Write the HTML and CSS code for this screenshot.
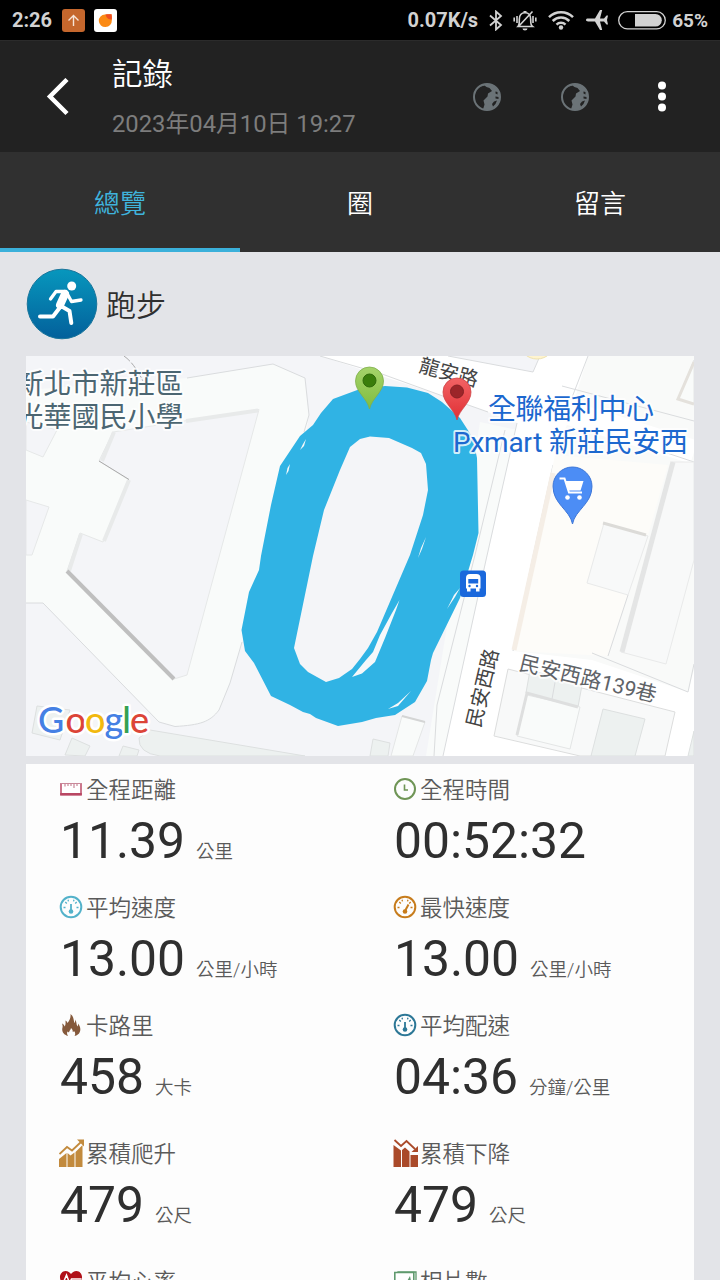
FILE: index.html
```html
<!DOCTYPE html>
<html lang="zh-Hant">
  <head>
    <meta charset="UTF-8" />
    <meta name="viewport" content="width=device-width, initial-scale=1.0" />
    <title>記錄</title>
    <link rel="stylesheet" href="styles.css">
  </head>
  <body>
    <div class="status-bar">
      <span class="clock">2:26</span>
      <svg class="app-icon" width="23" height="23" viewBox="0 0 23 23">
        <rect width="23" height="23" rx="3" fill="#c5672d" />
        <path d="M11.5 17V7M6.5 11.5l5-5 5 5" fill="none" stroke="#f6e4d8" stroke-width="1.4" />
      </svg>
      <svg class="app-icon" width="23" height="23" viewBox="0 0 23 23">
        <rect width="23" height="23" rx="3" fill="#fff" />
        <path d="M11 5.500c2.500-.2 4.500-.5 6.500-.2.500 2 .5 4 .3 6.200a6.500 6.300 0 1 1-6.800-6z" fill="#fb8a14" />
        <path d="M11.500 5.500c2-.2 4-.5 6-.2.4 2 .4 3.500.3 5.200-3 0-5.300-1-6.300-5z" fill="#ee4d22" />
      </svg>
      <span class="speed">0.07K/s</span>
      <svg class="bluetooth" width="14" height="21" viewBox="0 0 14 21">
        <path d="M1 5.500l11 9.500-5 4.500v-18l5 4.500L1 15.500" fill="none" stroke="#d2d2d2" stroke-width="1.8" />
      </svg>
      <svg class="mute" width="24" height="21" viewBox="0 0 24 21">
        <g fill="none" stroke="#d2d2d2" stroke-width="1.600">
          <path d="M5 16.500h14.500c-2-1.500-1.800-3-1.800-7 0-4-2-6.700-5.700-6.700S6.300 5.500 6.300 9.500c0 4 .2 5.500-1.300 7zM19.500 1.500l-14 15M4 6v7M1.200 7.500v4M20 6v7M22.800 7.500v4" />
        </g>
        <path d="M9.500 18.500h5a2.500 2 0 0 1-5 0zM10.500 1h3v2h-3z" fill="#d2d2d2" />
      </svg>
      <svg class="wifi" width="26" height="20" viewBox="0 0 26 20">
        <g fill="none" stroke="#d2d2d2" stroke-width="2.500">
          <path d="M1 7.200a17 17 0 0 1 24 0M4.700 11a11.700 11.700 0 0 1 16.600 0M8.500 14.600a6.400 6.400 0 0 1 9 0" />
        </g>
        <circle cx="13" cy="17.500" r="2.200" fill="#d2d2d2" />
      </svg>
      <svg class="plane" width="22" height="20" viewBox="0 0 22 20">
        <path d="M0 10c0-1 1-1.400 2-1.400h7L14 0h2.200l-2.200 8.600h4L20.500 5.500H22L21 10l1 4.500h-1.500L18 11.400h-4L16.200 20H14L9 11.400H2C1 11.400 0 11 0 10z" fill="#d2d2d2" />
      </svg>
      <svg class="battery" width="48" height="19" viewBox="0 0 48 19">
        <rect x=".7" y=".7" width="46.600" height="17.200" rx="8.600" fill="none" stroke="#d2d2d2" stroke-width="1.300" />
        <path d="M17 3h20.500a6.300 6.300 0 0 1 0 12.600H17z" fill="#d2d2d2" />
      </svg>
      <span class="percent">65%</span>
    </div>

    <header class="header">
      <svg class="back" width="24" height="38" viewBox="0 0 24 38">
        <path d="M21 1.500L4 18.500l17 17" fill="none" stroke="#fff" stroke-width="4.500" />
      </svg>
      <div class="heading">
        <h1>記錄</h1>
        <p>2023年04月10日 19:27</p>
      </div>
      <svg class="globe" width="28" height="28" viewBox="0 0 28 28">
        <use href="#globe" />
      </svg>
      <svg class="globe" width="28" height="28" viewBox="0 0 28 28">
        <g id="globe">
          <circle cx="14" cy="14" r="13" fill="none" stroke="#6b7377" stroke-width="2" />
          <path d="M8 3.500C12 0 19 1 22.500 4.500c2.500 2 4 5 4 9.500 0 5-2 8-4.500 10-3.500 3-8 3-12 2.500l1.500-5-1-4 4-4 .5-3 4-2.500-2.500-3-3-1-2-1.500z" fill="#6b7377" />
          <path d="M22.500 8.500l2 .5v2.500l-2-1zM22.500 13.500l3 .5v2l-3-.5zM19 21l2-2.500 3-1-1.500 3.500-2.500 2.500z" fill="#222" />
        </g>
      </svg>
      <svg class="more" width="10" height="32" viewBox="0 0 10 32">
        <g fill="#fff">
          <circle cx="5" cy="4.500" r="4" />
          <circle cx="5" cy="15.500" r="4" />
          <circle cx="5" cy="26.500" r="4" />
        </g>
      </svg>
    </header>

    <nav class="tabs">
      <a class="tab active">總覽</a>
      <a class="tab">圈</a>
      <a class="tab">留言</a>
    </nav>

    <main class="content">
      <div class="sport">
        <svg width="72" height="72" viewBox="0 0 72 72">
          <defs>
            <linearGradient id="sportBlue" x1="0" y1="0" x2="0" y2="1">
              <stop offset="0" stop-color="#0797bd" />
              <stop offset="1" stop-color="#03609b" />
            </linearGradient>
          </defs>
          <circle cx="36" cy="36" r="34.800" fill="url(#sportBlue)" stroke="#19759b" />
          <circle cx="45.700" cy="18" r="4.500" fill="#fff" />
          <g fill="none" stroke="#fff" stroke-linecap="round" stroke-linejoin="round">
            <path d="M24.500 31l5.500-7.500h10l5.500 10 9.500-1.500" stroke-width="3.300" />
            <path d="M14 48.500h13l8-10.500" stroke-width="4" />
            <path d="M35 38l8.500 5L45.300 55" stroke-width="4" />
            <path d="M39 26l-5 11" stroke-width="8" />
          </g>
        </svg>
        <span>跑步</span>
      </div>

      <!-- map -->
      <svg class="map" width="668" height="400" viewBox="26 356 668 400">
        <defs>
          <linearGradient id="pinGreen" x1="0" y1="0" x2="0" y2="1">
            <stop offset="0" stop-color="#a6d36b" />
            <stop offset="1" stop-color="#7fbd3e" />
          </linearGradient>
          <linearGradient id="pinRed" x1="0" y1="0" x2="0" y2="1">
            <stop offset="0" stop-color="#f26365" />
            <stop offset="1" stop-color="#e02f34" />
          </linearGradient>
        </defs>
        <rect x="26" y="356" width="668" height="400" fill="#f4f5f8" />

        <!-- school -->
        <path d="M26 390L187 378 273 364 305 378 309 415 300 480 242 642 230 683 219 710C210 722 200 725 175 726.500L159 722 43 603H26z" fill="#f9fbfa" />
        <path d="M187 378L273 364 305 378 309 415 304 432M242 642L230 683 219 710C210 722 200 725 175 726.500L159 722 43 603H26" class="edge" />
        <path d="M124 356q10 7 19 25" fill="none" stroke="#aaa" stroke-dasharray="8 2" />
        <path d="M113 432L259 409.500 187 675 174 679 67 571 80 533 103 542 129 480 99 461z" class="ground" />
        <path d="M26 422L57 430 43 457 26 450zM26 500L49 507 32 555H26z" class="ground" />
        <path d="M102 461L114 432M104 541L129 480M69 571L81 534M186 421L258 410.500" fill="none" stroke="#e8eaea" stroke-width="4" />
        <path d="M99 461l30 18.500" stroke="#aaa" />
        <path d="M67 571L174 679" stroke="#bfbfbf" stroke-width="4" />

        <path d="M150 730L305 756H160Q138 753 139 738zM37 706L32 733 60 740 70 710zM65 755L72 738 90 746 85 756zM119 756L123 746 139 750 137 756z" class="house" />

        <!-- main roads -->
        <path d="M480 422L517 430 443 756 426 756z" fill="#f9fbfa" />
        <path d="M505 430L475 555 437 705 434 756" class="edge" />
        <path d="M320 356H448L533 372 540 356H588L694 420V756H443L517 423 488 412 440 395z" fill="#fff" />
        <path d="M320 356L382 374 440 395 488 412M448 356L533 372 540 356M517 423L486 560 443 756" class="edge" />
        <circle cx="537" cy="341" r="18" fill="#fff4cf" stroke="#eee2b0" />

        <!-- right hand blocks -->
        <path d="M588 356H694V670L688 692 592 660 513 651 533 556 553 470z" fill="#f9faf9" />
        <path d="M588 356L571 400M513 651L533 556 553 465" class="edge" />
        <path d="M555 455L514 651 608 656 628 595 587 583 604 523 648 536 668 465z" fill="#fdfcf9" />
        <path d="M553 473L514 650" stroke="#f5eee6" stroke-width="5" />
        <path d="M587 583L604 523 648 536 628 595z" fill="#f8f9f9" stroke="#e9eaea" />
        <path d="M603 523l43 12" stroke="#dcdbd8" stroke-width="3" />
        <path d="M560 410L694 452" stroke="#fff" stroke-width="24" />
        <path d="M562 386L694 421M667 453L694 462" class="edge" />
        <path d="M672 462H694V560L666 664 621 652z" fill="#f8f9f9" stroke="#e9eaea" />
        <path d="M673 462L622 652" stroke="#e4e5e5" stroke-width="5" />
        <path d="M694 360L678 399 694 404z" class="yard" />
        <path d="M694 362L678 399 694 404" fill="none" stroke="#e4e1dc" stroke-width="3" />
        <path d="M628 595L608 656M592 653L688 692 694 664" class="edge" />

        <path d="M508 669L494 736 580 756H665L675 712z" fill="#f8f9f9" stroke="#dcdddd" />
        <path d="M530 670L526 693 578 707 582 685zM603 709L645 719 635 756H591z" class="house" />
        <path d="M556 677L552 699" class="edge" />
        <path d="M527 695L517 736 570 749 580 707z" class="yard" />
        <path d="M578 707L527 693 517 735" fill="none" stroke="#dedfdf" stroke-width="3" />
        <path d="M694 731L688 756H694z" class="house" />
        <path d="M402 716L425 722 413 756H391z" class="yard" />
        <path d="M402 716L425 722" stroke="#d4d5d5" stroke-width="2" />
        <path d="M373 739L390 743 388 756H370z" class="house" />

        <!-- route -->
        <path fill="#30b3e4" fill-rule="evenodd" d="M360 389L333 399 321 413 313 425 300 436 280 466 271 505 261 556 259 570 249 592 241.500 630 245 651 254 663 271 696 290 705 303 712 310 714 316 718 338 726 362 722 376 718 395 715 415 702 427 681 431 660 433 653 460 598 473 555 478.500 533 477 458 473 438 460 418 442 402 428 393 407 387.500 385 386z
          M360 439L350 447 340 470 324 510 313 556 294 648 300 664 308 672 326 682 339 678 352 669 360 659 368 648 377 632 410 555 423 515 428 490 426 464 421 453 412 448 389 438 370 436.500z" />
        <g fill="#f6f8fa">
          <path d="M399.500 600L392 613 380 635 373 652 366 660 352 677 362 673.500 375 662 385 638 396 610z" />
          <path d="M460 588L454 595 447 609 455 597zM388 709L398 706 411 691 398 703zM426 537L421 548 418 558 422 549zM306 439L303 444 300 450 304 446zM290 464L287.500 468 286 475 288.500 471z" />
        </g>

        <!-- labels -->
        <g class="map-label school" text-anchor="end">
          <text x="183.500" y="393.500">新北市新莊區</text>
          <text x="183.500" y="426.500">光華國民小學</text>
        </g>
        <g class="map-label road">
          <text font-size="20" transform="translate(418 371.500) rotate(15)">龍安路</text>
          <text font-size="20" transform="translate(480 728.500) rotate(-76.500)">民安西路</text>
          <text class="lane" font-size="21" transform="translate(518 669.500) rotate(13.500)">民安西路139巷</text>
        </g>
        <g class="map-label shop">
          <text x="488" y="419" textLength="166">全聯福利中心</text>
          <text x="453" y="452" textLength="235">Pxmart 新莊民安西</text>
        </g>

        <!-- pins -->
        <path d="M369.500 409C367 398 355.500 392 355.500 381a14 14 0 0 1 28 0C383.500 392 372 398 369.500 409z" fill="url(#pinGreen)" stroke="#7fae4c" stroke-width=".8" />
        <circle cx="369.500" cy="380.500" r="6.500" fill="#3a7d0b" stroke="#2f6a0a" />
        <path d="M457 420C454.500 409 443 403 443 392a14 14 0 0 1 28 0C471 403 459.500 409 457 420z" fill="url(#pinRed)" stroke="#cf4548" stroke-width=".8" />
        <circle cx="457" cy="391.500" r="6.500" fill="#9c2529" stroke="#862024" />
        <path d="M572.500 524C570 510 553 504 553 486.500a19.500 19.500 0 0 1 39 0C592 504 575 510 572.500 524z" fill="#4c8df5" stroke="#3e77d8" />
        <path d="M559.500 478.500h5l4.500 14h13" fill="none" stroke="#fff" stroke-width="2" />
        <path d="M565.500 481h18l-3 9.500h-12.500z" fill="#fff" />
        <circle cx="567.500" cy="497.500" r="2.300" fill="#fff" />
        <circle cx="579.500" cy="497.500" r="2.300" fill="#fff" />
        <rect x="460" y="570.500" width="26" height="26.500" rx="3.500" fill="#1a68dc" />
        <path d="M466 578q0-4 4-4h6.500q4 0 4 4v10.500h-1v3h-3.500v-3h-5.500v3H467v-3h-1z" fill="#fff" />
        <path d="M468.300 579h9.900v4.500h-9.900z" fill="#1a68dc" />
        <circle cx="469.500" cy="586" r="1.200" fill="#1a68dc" />
        <circle cx="477" cy="586" r="1.200" fill="#1a68dc" />

        <text class="google" x="38 65.500 85 104.500 122.300 130" y="732.500"><tspan fill="#4580e4">G</tspan><tspan fill="#dc4437">o</tspan><tspan fill="#f2b90f">o</tspan><tspan fill="#4580e4">g</tspan><tspan fill="#35a152">l</tspan><tspan fill="#dc4437">e</tspan></text>
      </svg>

      <section class="stats">
        <div class="stat">
          <div class="label">
            <svg viewBox="0 0 24 24"><path d="M2 6v12h20V6" fill="#fff" stroke="#c4607a" stroke-width="1.700" /><path d="M1.200 17h21.600" stroke="#b94763" stroke-width="2" /><path d="M1.200 6.500h21.600M6 6v3.500M9 6v3M12 6v3M15 6v5M18 6v3" stroke="#c98899" stroke-width="1.200" /></svg>
            全程距離
          </div>
          <div class="value">11.39<small>公里</small></div>
        </div>
        <div class="stat">
          <div class="label">
            <svg viewBox="0 0 24 24"><circle cx="12" cy="12" r="10" fill="none" stroke="#6f9556" stroke-width="2" /><path d="M11.500 7.500v5.500H15" fill="none" stroke="#6f9556" stroke-width="1.600" /></svg>
            全程時間
          </div>
          <div class="value">00:52:32</div>
        </div>
        <div class="stat">
          <div class="label">
            <svg class="gauge" viewBox="0 0 24 24" color="#53b2ca"><g id="dial"><circle cx="12" cy="12" r="10.300" fill="none" stroke="currentColor" stroke-width="2" /><path d="M4.500 12.500h2M17.500 12.500h2M6.300 7l1.500 1.500M17.700 7l-1.500 1.500M9 4.800l.5 1.600M15 4.800l-.5 1.600" stroke="currentColor" stroke-width="1.300" /></g><path d="M12 9v7" stroke="currentColor" stroke-width="1.800" /><circle cx="12" cy="16.500" r="2.300" fill="currentColor" /></svg>
            平均速度
          </div>
          <div class="value">13.00<small>公里/小時</small></div>
        </div>
        <div class="stat">
          <div class="label">
            <svg class="gauge" viewBox="0 0 24 24" color="#c77c1c"><use href="#dial" /><path d="M15.500 9.500L12 16" stroke="currentColor" stroke-width="2" /><circle cx="12" cy="16.500" r="2.300" fill="currentColor" /></svg>
            最快速度
          </div>
          <div class="value">13.00<small>公里/小時</small></div>
        </div>
        <div class="stat">
          <div class="label">
            <svg viewBox="0 0 24 24"><path d="M9 23C4 21.500 2.500 18 3.500 14.500c.3-1.500 0-3-.5-4 1.500.5 2.300 1.500 2.500 3C7 11.500 6.500 9 6.500 7.500c1 .6 1.700 1.500 2 2.500C10.500 7.500 12 4.500 11.500 1 15 3.500 14.500 7.500 15.500 10c.7-.8.800-2 .5-3.500 2 2 1 5 2.500 7 .5-.8.700-1.700.5-3 2.500 3 2.800 6 1.800 8.500-.7 2-2.800 3.600-5.300 4 1-1.500 1-3.500-.5-5-.3.800-.8 1.200-1.300 1 .3-1.500-.5-3-1.700-4-.2 2-1.800 2.800-2 4.500l-1.500-1c-.8 1.500-.5 3 .5 4.500z" fill="#85593b" /></svg>
            卡路里
          </div>
          <div class="value">458<small>大卡</small></div>
        </div>
        <div class="stat">
          <div class="label">
            <svg class="gauge" viewBox="0 0 24 24" color="#2c7796"><use href="#dial" /><path d="M12 9v7" stroke="currentColor" stroke-width="1.800" /><circle cx="12" cy="16.500" r="2.300" fill="currentColor" /></svg>
            平均配速
          </div>
          <div class="value">04:36<small>分鐘/公里</small></div>
        </div>
        <div class="stat">
          <div class="label">
            <svg class="chart" viewBox="0 0 26 28"><path d="M0 28V20l7.500-6v14zM8.500 28V14l3 2.500 4-3V28zM16.500 28V13l7-7V28z" fill="#c28a3d" /><path d="M.5 15l7.500-7 5 3.500 9-8.500" fill="none" stroke="#c28a3d" stroke-width="1.800" /><path d="M18 .500h7v7z" fill="#c28a3d" /></svg>
            累積爬升
          </div>
          <div class="value">479<small>公尺</small></div>
        </div>
        <div class="stat">
          <div class="label">
            <svg class="chart" viewBox="0 0 26 28"><path d="M.5 28V6l7.500 5.500V28zM9 28V11l3-2.500 4.500 4V28zM17.500 28V16H25v12z" fill="#aa4a2a" /><path d="M1.500 1l6.500 6 5.500-5 8.500 8" fill="none" stroke="#aa4a2a" stroke-width="1.800" /><path d="M18.500 13h6.500V7z" fill="#aa4a2a" /></svg>
            累積下降
          </div>
          <div class="value">479<small>公尺</small></div>
        </div>
        <div class="stat">
          <div class="label">
            <svg viewBox="0 0 24 24"><path d="M12 23L2.500 13C-1 8 2 2 6.500 2 9 2 11 3.500 12 5c1-1.500 3-3 5.500-3C22 2 25 8 21.500 13z" fill="#b01018" /><path d="M1 12h4l2.500-6 3 8 2-4h10" fill="none" stroke="#fff" stroke-width="1.500" /></svg>
            平均心率
          </div>
        </div>
        <div class="stat">
          <div class="label">
            <svg viewBox="0 0 24 24"><path d="M5 5V3h18v15h-2" fill="none" stroke="#5f9a6e" stroke-width="1.300" /><path d="M1.800 3.500h19v17h-19z" fill="#fff" stroke="#5f9a6e" stroke-width="1.600" /><path d="M4 17l5-6 4 3 4-7 2 10z" fill="#5f9a6e" /></svg>
            相片數
          </div>
        </div>
      </section>
    </main>
  </body>
</html>
```
FILE: styles.css
```css
* {
  box-sizing: border-box;
}

body {
  margin: 0;
  width: 720px;
  height: 1280px;
  overflow: hidden;
  background: #e3e4e8;
  font-family: Roboto, "Noto Sans CJK TC", sans-serif;
  color: #2f2f2f;
}

h1, p {
  margin: 0;
  font-weight: normal;
}

/* status bar */
.status-bar {
  display: flex;
  align-items: center;
  height: 40px;
  padding: 0 12px;
  background: #000;
  color: #d2d2d2;
  font-size: 20px;
  font-weight: bold;
}

.clock {
  width: 50px;
}

.app-icon {
  margin-right: 9px;
}

.speed {
  margin-left: auto;
  margin-right: 11px;
}

.bluetooth {
  margin-right: 10px;
}

.mute {
  margin-right: 11px;
}

.wifi {
  margin-right: 12px;
}

.plane {
  margin-right: 10px;
}

.battery {
  margin-right: 6px;
}

.percent {
  font-size: 19px;
}

/* title */
.header {
  display: flex;
  align-items: center;
  height: 112px;
  padding: 0 53px 0 46px;
  background: #222;
  border-top: 1px solid #2b2b2b;
}

.heading {
  width: 361px;
  margin-left: 42px;
  padding-top: 2px;
}

.heading h1 {
  font-size: 30.5px;
  font-weight: 350;
  line-height: 44px;
  color: #fff;
}

.heading p {
  margin-top: 9px;
  font-size: 23.8px;
  line-height: 36px;
  color: #7d7d7d;
}

.globe {
  margin-right: 60px;
}

.more {
  margin-left: auto;
}

/* tabs */
.tabs {
  display: flex;
  height: 100px;
  background: #303030;
}

.tab {
  flex: 1;
  padding-top: 4px;
  border-bottom: 4px solid transparent;
  color: #fff;
  font-size: 26px;
  font-weight: 350;
  line-height: 96px;
  text-align: center;
}

.tab.active {
  color: #3fb3dc;
  border-bottom-color: #3bb0da;
}

.content {
  padding: 0 26px;
}

.sport {
  display: flex;
  align-items: center;
  height: 104px;
  font-size: 30px;
  font-weight: 350;
}

.sport span {
  margin: -2px 0 0 8px;
}

/* map */
.map {
  display: block;
}

.ground {
  fill: #f4f5f8;
  stroke: #e6e8e8;
}

.house {
  fill: #edf1f0;
  stroke: #dde0e0;
}

.yard {
  fill: #f9fbfa;
  stroke: #e4e6e6;
}

.edge {
  fill: none;
  stroke: #dadcde;
}

.map-label {
  font-size: 28px;
  paint-order: stroke;
  stroke: rgba(255, 255, 255, .8);
  stroke-width: 4px;
  stroke-linejoin: round;
}

.school {
  fill: #4c6672;
}

.road {
  fill: #444;
}

.lane {
  fill: #5f6368;
}

.shop {
  fill: #1c68cf;
}

.google {
  font-family: Lato, sans-serif;
  font-size: 36px;
  font-weight: 500;
  paint-order: stroke;
  stroke: #fff;
  stroke-width: 5px;
  stroke-linejoin: round;
}

/* numbers */
.stats {
  display: grid;
  grid-template-columns: 334px 334px;
  grid-template-rows: 118px 118px 128px 128px 24px;
  height: 516px;
  margin-top: 8px;
  overflow: hidden;
  background: #fdfdfd;
}

.stat {
  padding: 8px 0 0 33px;
}

.label {
  display: flex;
  align-items: center;
  height: 32px;
  font-size: 22.5px;
  font-weight: 350;
  color: #5a5a5a;
}

.label svg {
  flex: none;
  width: 24px;
  height: 24px;
  margin-top: 1px;
  margin-right: 3px;
}

.label .chart {
  width: 26px;
  height: 28px;
  margin-right: 1px;
}

.value {
  margin: 1px 0 0 1px;
  font-size: 49.8px;
  line-height: 72px;
  white-space: nowrap;
}

.value small {
  margin-left: 11px;
  font-size: 18.5px;
  font-weight: 350;
  color: #5a5a5a;
}
```
